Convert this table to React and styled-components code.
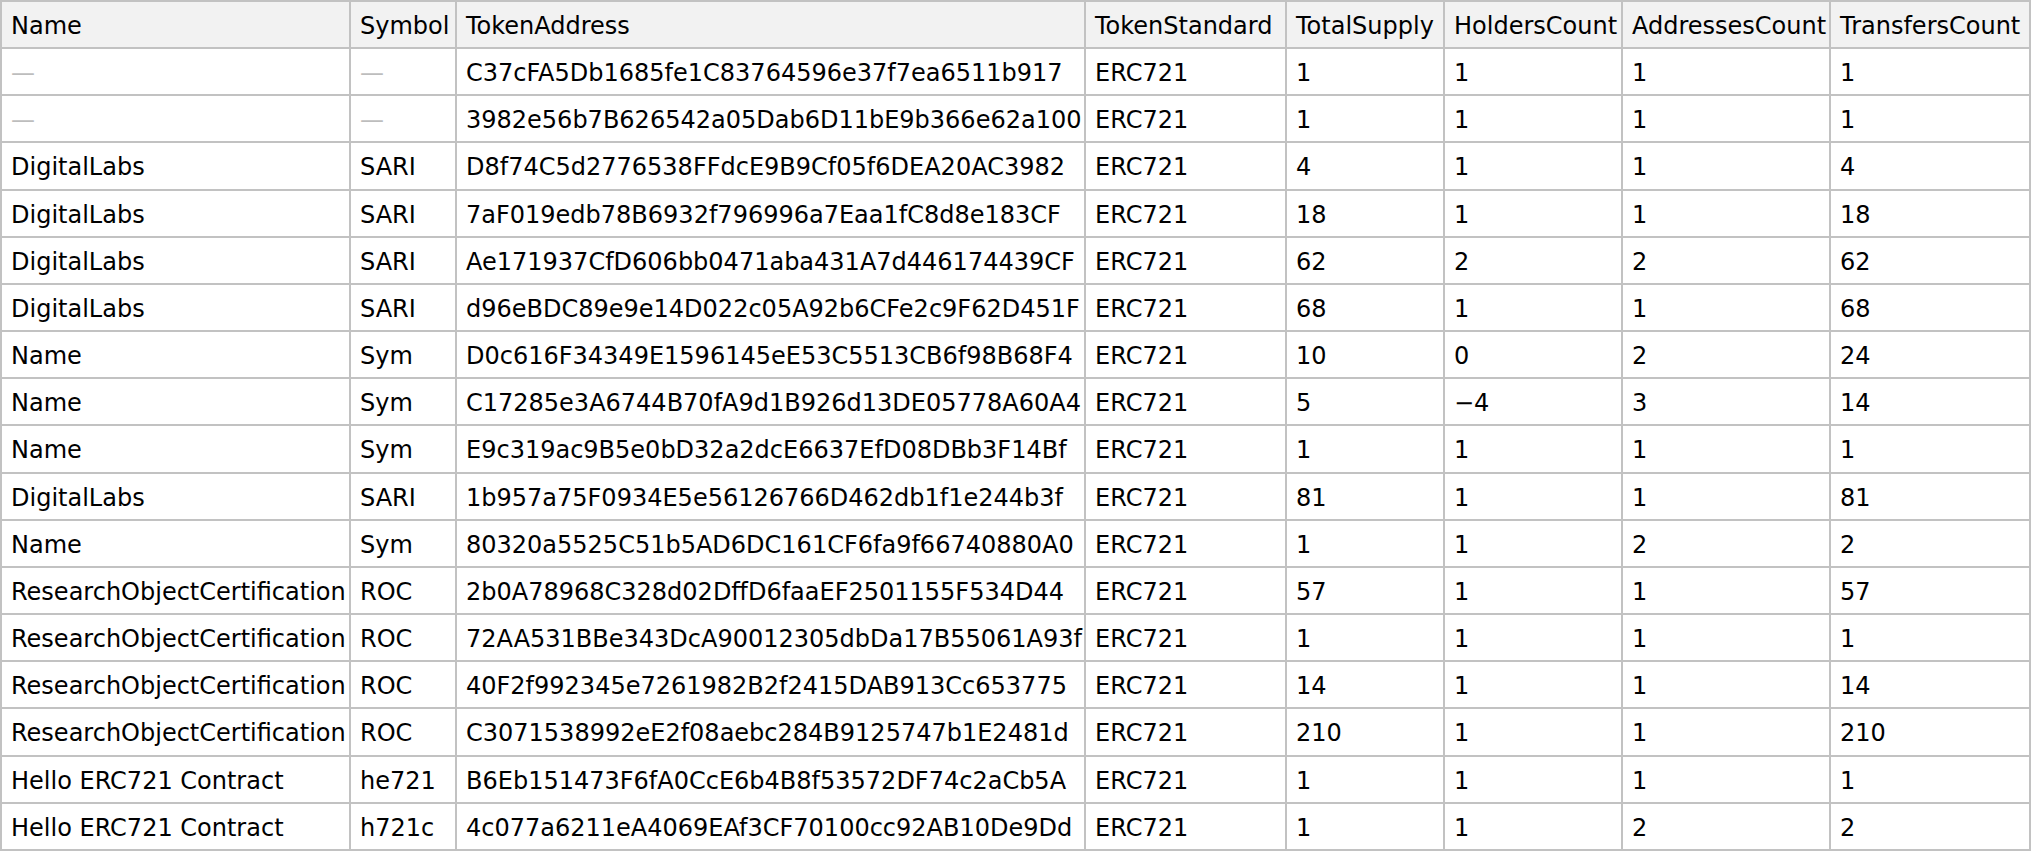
import React from "react";
import styled, { createGlobalStyle } from "styled-components";

const GlobalStyle = createGlobalStyle`
  body {
    margin: 0;
    background: #ffffff;
  }
`;

const Table = styled.table`
  border-collapse: collapse;
  font-family: "DejaVu Sans", Verdana, sans-serif;
  font-size: 24px;
  color: #000000;
  white-space: nowrap;
`;

const HeadCell = styled.th`
  width: ${(p) => p.$w}px;
  background: #f2f2f2;
  font-weight: normal;
  text-align: left;
  border: 2px solid #c2c2c2;
  padding: 3px 1px 0 9px;
  line-height: 42.15px;
`;

const Cell = styled.td`
  border: 2px solid #c2c2c2;
  padding: 3px 1px 0 9px;
  line-height: 42.15px;
  color: ${(p) => (p.$empty ? "#bdbdbd" : "#000000")};
`;

const columns = [
  { label: "Name", width: 337 },
  { label: "Symbol", width: 94 },
  { label: "TokenAddress", width: 617 },
  { label: "TokenStandard", width: 189 },
  { label: "TotalSupply", width: 146 },
  { label: "HoldersCount", width: 166 },
  { label: "AddressesCount", width: 196 },
  { label: "TransfersCount", width: 188 },
];

const tokens = [
  [null, null, "C37cFA5Db1685fe1C83764596e37f7ea6511b917", 1, 1, 1, 1],
  [null, null, "3982e56b7B626542a05Dab6D11bE9b366e62a100", 1, 1, 1, 1],
  ["DigitalLabs", "SARI", "D8f74C5d2776538FFdcE9B9Cf05f6DEA20AC3982", 4, 1, 1, 4],
  ["DigitalLabs", "SARI", "7aF019edb78B6932f796996a7Eaa1fC8d8e183CF", 18, 1, 1, 18],
  ["DigitalLabs", "SARI", "Ae171937CfD606bb0471aba431A7d446174439CF", 62, 2, 2, 62],
  ["DigitalLabs", "SARI", "d96eBDC89e9e14D022c05A92b6CFe2c9F62D451F", 68, 1, 1, 68],
  ["Name", "Sym", "D0c616F34349E1596145eE53C5513CB6f98B68F4", 10, 0, 2, 24],
  ["Name", "Sym", "C17285e3A6744B70fA9d1B926d13DE05778A60A4", 5, -4, 3, 14],
  ["Name", "Sym", "E9c319ac9B5e0bD32a2dcE6637EfD08DBb3F14Bf", 1, 1, 1, 1],
  ["DigitalLabs", "SARI", "1b957a75F0934E5e56126766D462db1f1e244b3f", 81, 1, 1, 81],
  ["Name", "Sym", "80320a5525C51b5AD6DC161CF6fa9f66740880A0", 1, 1, 2, 2],
  ["ResearchObjectCertification", "ROC", "2b0A78968C328d02DffD6faaEF2501155F534D44", 57, 1, 1, 57],
  ["ResearchObjectCertification", "ROC", "72AA531BBe343DcA90012305dbDa17B55061A93f", 1, 1, 1, 1],
  ["ResearchObjectCertification", "ROC", "40F2f992345e7261982B2f2415DAB913Cc653775", 14, 1, 1, 14],
  ["ResearchObjectCertification", "ROC", "C3071538992eE2f08aebc284B9125747b1E2481d", 210, 1, 1, 210],
  ["Hello ERC721 Contract", "he721", "B6Eb151473F6fA0CcE6b4B8f53572DF74c2aCb5A", 1, 1, 1, 1],
  ["Hello ERC721 Contract", "h721c", "4c077a6211eA4069EAf3CF70100cc92AB10De9Dd", 1, 1, 2, 2],
];

// negative numbers get a real minus sign
const num = (n) => (n < 0 ? "\u2212" + Math.abs(n) : String(n));

function App() {
  return (
    <>
      <GlobalStyle />
      <Table>
        <thead>
          <tr>
            {columns.map((c) => (
              <HeadCell key={c.label} $w={c.width}>
                {c.label}
              </HeadCell>
            ))}
          </tr>
        </thead>
        <tbody>
          {tokens.map(([name, symbol, address, supply, holders, addresses, transfers]) => (
            <tr key={address}>
              <Cell $empty={!name}>{name || "\u2014"}</Cell>
              <Cell $empty={!symbol}>{symbol || "\u2014"}</Cell>
              <Cell>{address}</Cell>
              <Cell>ERC721</Cell>
              <Cell>{num(supply)}</Cell>
              <Cell>{num(holders)}</Cell>
              <Cell>{num(addresses)}</Cell>
              <Cell>{num(transfers)}</Cell>
            </tr>
          ))}
        </tbody>
      </Table>
    </>
  );
}

export default App;
